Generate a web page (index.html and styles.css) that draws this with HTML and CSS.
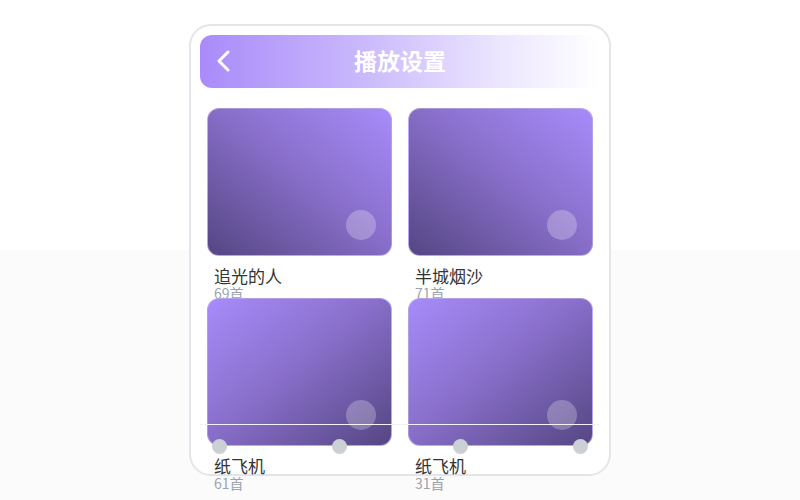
FILE: index.html
```html
<!DOCTYPE html>
<html lang="zh">
<head>
    <meta charset="UTF-8">
    <meta name="viewport" content="width=device-width, initial-scale=1.0">
    <title>播放设置</title>
    <link rel="stylesheet" href="styles.css">
</head>
<body>
    <div class="phone">
        <div class="top-bar">
            <svg class="back" width="14" height="22" viewBox="0 0 14 22">
                <path d="M11 2 L2 11 L11 20" fill="none" stroke="#fff" stroke-width="3" stroke-linecap="round" stroke-linejoin="round"/>
            </svg>
            <h1>播放设置</h1>
        </div>

        <div class="list-grid">
            <div class="list-item">
                <div class="cover cover-up"><span class="play"></span></div>
                <div class="name">追光的人</div>
                <div class="count">69首</div>
            </div>
            <div class="list-item">
                <div class="cover cover-up"><span class="play"></span></div>
                <div class="name">半城烟沙</div>
                <div class="count">71首</div>
            </div>
            <div class="list-item">
                <div class="cover cover-down"><span class="play"></span></div>
                <div class="name">纸飞机</div>
                <div class="count">61首</div>
            </div>
            <div class="list-item">
                <div class="cover cover-down"><span class="play"></span></div>
                <div class="name">纸飞机</div>
                <div class="count">31首</div>
            </div>
        </div>

        <!-- slider overlay -->
        <div class="track">
            <div class="track-line"></div>
            <div class="dots">
                <span class="dot"></span>
                <span class="dot"></span>
                <span class="dot"></span>
                <span class="dot"></span>
            </div>
        </div>
    </div>
</body>
</html>
```

FILE: styles.css
```css
:root {
    --purple-light: #a78bfa;
    --purple-dark: #554683;
    --frame-border: #e4e5ea;
    --text-dark: #333333;
    --text-gray: #9ca3af;
    --dot-color: #cbd0d5;
}

body {
    margin: 0;
    height: 500px;
    font-family: "Noto Sans CJK SC", "Noto Sans", sans-serif;
    background: linear-gradient(#ffffff 50%, #fbfbfb 50%);
    display: flex;
    justify-content: center;
    padding-top: 24px;
    box-sizing: border-box;
}

.phone {
    position: relative;
    width: 422px;
    height: 452px;
    box-sizing: border-box;
    border: 2px solid var(--frame-border);
    border-radius: 22px;
    background: #fff;
    padding: 9px;
}

.top-bar {
    position: relative;
    height: 53px;
    box-sizing: border-box;
    padding-bottom: 4px;
    border-radius: 12px;
    background: linear-gradient(to right, #a98bf9 0%, #c9b8fc 40%, #ece6fe 75%, #ffffff 100%);
    display: flex;
    align-items: center;
    justify-content: center;
}

.back {
    position: absolute;
    left: 17px;
    top: 15px;
}

.top-bar h1 {
    margin: 0;
    color: #fff;
    font-size: 23px;
    font-weight: 700;
}

.list-grid {
    display: grid;
    grid-template-columns: 1fr 1fr;
    grid-auto-rows: 190px;
    column-gap: 16px;
    margin-top: 20px;
    padding: 0 7px;
}

.cover {
    position: relative;
    height: 148px;
    border-radius: 12px;
    box-sizing: border-box;
    border: 1px solid rgba(200, 186, 250, 0.7);
}

.cover-up {
    background: linear-gradient(to bottom left, var(--purple-light), #8a70cc 45%, var(--purple-dark));
}

.cover-down {
    background: linear-gradient(to bottom right, var(--purple-light), #8a70cc 45%, var(--purple-dark));
}

.play {
    position: absolute;
    right: 15px;
    bottom: 15px;
    width: 30px;
    height: 30px;
    border-radius: 50%;
    background: rgba(255, 255, 255, 0.25);
}

.name {
    margin: 10px 0 0 7px;
    font-size: 17px;
    line-height: 20px;
    color: var(--text-dark);
}

.count {
    margin-left: 7px;
    font-size: 14px;
    line-height: 14px;
    color: var(--text-gray);
}

.track {
    position: absolute;
    left: 9px;
    right: 9px;
    top: 398px;
}

.track-line {
    height: 1px;
    background: #f2f2f4;
}

.dots {
    display: flex;
    justify-content: space-between;
    padding: 14px 12px 0;
}

.dot {
    width: 15px;
    height: 15px;
    border-radius: 50%;
    background: var(--dot-color);
}
```
